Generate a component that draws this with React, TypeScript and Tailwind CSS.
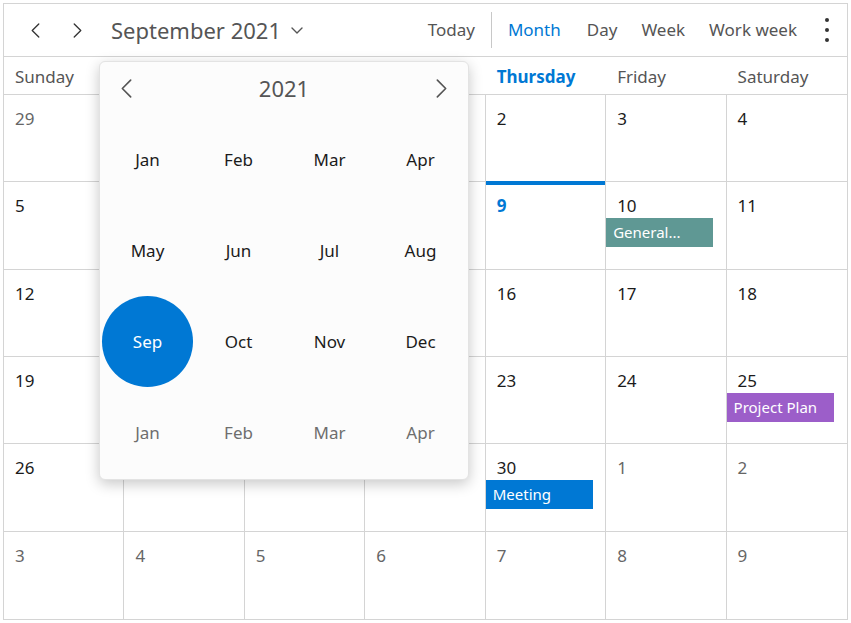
import { useState } from 'react';

type Cell = { day: number; muted?: boolean; today?: boolean; event?: { title: string; color: string } };

const DAY_NAMES = ['Sunday', 'Monday', 'Tuesday', 'Wednesday', 'Thursday', 'Friday', 'Saturday'];

const buildCells = (): Cell[] => {
  const cells: Cell[] = [];
  [29, 30, 31].forEach((d) => cells.push({ day: d, muted: true }));
  for (let d = 1; d <= 30; d++) cells.push({ day: d });
  for (let d = 1; d <= 9; d++) cells.push({ day: d, muted: true });
  cells[11].today = true;
  cells[12].event = { title: 'General...', color: 'bg-[#5f9894]' };
  cells[27].event = { title: 'Project Plan', color: 'bg-[#9c5ec9]' };
  cells[32].event = { title: 'Meeting', color: 'bg-[#0078d4]' };
  return cells;
};

const MONTHS = ['Jan', 'Feb', 'Mar', 'Apr', 'May', 'Jun', 'Jul', 'Aug', 'Sep', 'Oct', 'Nov', 'Dec', 'Jan', 'Feb', 'Mar', 'Apr'];

const Chevron = ({ dir, className }: { dir: 'left' | 'right' | 'down'; className?: string }) => {
  const points = dir === 'left' ? '8,1 1,8 8,15' : dir === 'right' ? '1,1 8,8 1,15' : '1,1 6,6 11,1';
  const box = dir === 'down' ? '0 0 12 7' : '0 0 9 16';
  return (
    <svg viewBox={box} className={className} fill="none" stroke="currentColor" strokeWidth={1.4} strokeLinecap="round" strokeLinejoin="round">
      <polyline points={points} />
    </svg>
  );
};

const MonthPicker = () => (
  <div className="absolute left-[95px] top-[57px] w-[370px] rounded-md border border-[#e3e3e3] bg-[#fcfcfc] px-[2px] pb-[1px] shadow-[0_4px_14px_rgba(0,0,0,0.22)]">
    <div className="flex h-[52px] items-center justify-between px-[19px]">
      <Chevron dir="left" className="h-[19px] w-[11px] text-[#555]" />
      <span className="text-[22px] text-[#555]">2021</span>
      <Chevron dir="right" className="h-[19px] w-[11px] text-[#555]" />
    </div>
    <div className="grid grid-cols-4">
      {MONTHS.map((m, i) => (
        <div key={i} className="flex h-[91px] items-center justify-center">
          {i === 8 ? (
            <span className="flex h-[91px] w-[91px] items-center justify-center rounded-full bg-[#0078d4] text-[17px] text-white">{m}</span>
          ) : (
            <span className={`text-[17px] ${i >= 12 ? 'text-[#6e6e6e]' : 'text-[#1b1b1b]'}`}>{m}</span>
          )}
        </div>
      ))}
    </div>
  </div>
);

export default function App() {
  const [cells] = useState(buildCells);

  return (
    <div className="h-[623px] w-[851px] bg-white pl-[3px] pt-[3px] font-['Noto_Sans',sans-serif]">
      <div className="relative flex h-[617px] w-[845px] flex-col border border-[#d4d4d4]">
        <div className="flex h-[53px] items-center border-b border-[#d4d4d4] pl-[27px] pr-[18px]">
          <Chevron dir="left" className="h-[15px] w-[9px] text-[#333]" />
          <Chevron dir="right" className="ml-[33px] h-[15px] w-[9px] text-[#333]" />
          <span className="ml-[29px] text-[22px] text-[#555]">September 2021</span>
          <Chevron dir="down" className="ml-[10px] h-[7px] w-[12px] text-[#555]" />
          <div className="ml-auto flex items-center text-[17px] text-[#555]">
            <span>Today</span>
            <span className="mx-[16px] h-[36px] w-px bg-[#c8c8c8]" />
            <span className="text-[#0078d4]">Month</span>
            <span className="ml-[26px]">Day</span>
            <span className="ml-[24px]">Week</span>
            <span className="ml-[24px]">Work week</span>
            <span className="ml-[28px] flex flex-col items-center gap-[6px]">
              <span className="h-[4px] w-[4px] rounded-full bg-[#333]" />
              <span className="h-[4px] w-[4px] rounded-full bg-[#333]" />
              <span className="h-[4px] w-[4px] rounded-full bg-[#333]" />
            </span>
          </div>
        </div>
        <div className="grid h-[38px] grid-cols-7 border-b border-[#d4d4d4]">
          {DAY_NAMES.map((d) => (
            <div key={d} className={`flex items-center pl-[11px] pt-[2px] text-[17px] ${d === 'Thursday' ? 'font-bold text-[#0078d4]' : 'text-[#555]'}`}>
              {d}
            </div>
          ))}
        </div>
        <div className="grid flex-1 grid-cols-7 grid-rows-6">
          {cells.map((c, i) => (
            <div
              key={i}
              className={`relative flex flex-col ${i % 7 !== 6 ? 'border-r' : ''} ${i < 35 ? 'border-b' : ''} border-[#d4d4d4]`}
            >
              {c.today && <div className="absolute left-0 right-0 top-[-1px] h-[4px] bg-[#0078d4]" />}
              <span
                className={`pl-[11px] pt-[12px] text-[17px] leading-[24px] ${
                  c.today ? 'font-bold text-[#0078d4]' : c.muted ? 'text-[#666]' : 'text-[#1b1b1b]'
                }`}
              >
                {c.day}
              </span>
              {c.event && (
                <div className={`h-[29px] w-[107px] pl-[7px] text-[15px] leading-[29px] text-white ${c.event.color}`}>
                  {c.event.title}
                </div>
              )}
            </div>
          ))}
        </div>
        <MonthPicker />
      </div>
    </div>
  );
}
